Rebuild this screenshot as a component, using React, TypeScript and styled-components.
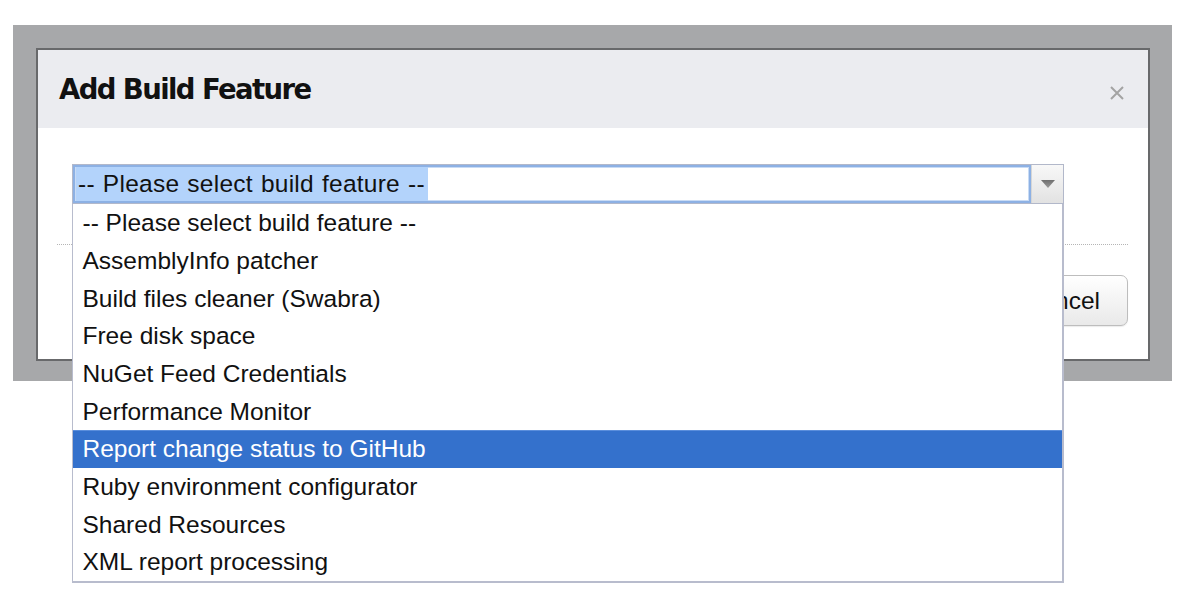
import React from "react";
import styled, { createGlobalStyle } from "styled-components";

const GlobalStyle = createGlobalStyle`
  html, body { margin: 0; padding: 0; background: #ffffff; }
  body { font-family: "Liberation Sans", Arial, sans-serif; color: #111; }
`;

const Page = styled.div`
  height: 600px;
  box-sizing: border-box;
  padding: 25px 28px 0 13px;
`;

const Backdrop = styled.div`
  width: 1159px;
  box-sizing: border-box;
  background: #a7a8aa;
  padding: 23px 22px 20px 23px;
`;

const Dialog = styled.div`
  border: 2px solid #68696b;
  background: #ffffff;
  display: flex;
  flex-direction: column;
`;

const Header = styled.div`
  height: 78px;
  background: #ebecf0;
  display: flex;
  align-items: center;
  justify-content: space-between;
  padding: 0 23px 0 21px;
`;

const Title = styled.h1`
  margin: 0;
  font-family: "DejaVu Sans", "Liberation Sans", sans-serif;
  font-weight: bold;
  font-size: 27.5px;
  letter-spacing: -1.6px;
  color: #111;
`;

const Close = styled.button`
  border: 0;
  background: none;
  padding: 0;
  width: 16px;
  height: 16px;
  margin-top: 8px;
  display: flex;
  cursor: pointer;
`;

const Body = styled.div`
  padding: 36px 0 0 34px;
`;

const SelectWrap = styled.div`
  position: relative;
  width: 992px;
  height: 40px;
  box-sizing: border-box;
  border: 1px solid #b2b8ca;
  display: flex;
`;

const Input = styled.div`
  flex: 1;
  box-sizing: border-box;
  border: 2px solid #8db1e4;
  box-shadow: inset 0 0 0 1px #c8dbf5;
  display: flex;
  align-items: center;
  padding-left: 1px;
  font-size: 24.5px;
`;

const Selected = styled.span`
  background: #b3d3fb;
  padding: 3px 3px 3px 2px;
  line-height: 28px;
  letter-spacing: 0.25px;
  word-spacing: 1px;
`;

const ArrowButton = styled.div`
  width: 31px;
  background: linear-gradient(#f8f8f8, #e2e2e2);
  border-left: 1px solid #d6d6d6;
  display: flex;
  align-items: center;
  justify-content: center;
`;

const Dropdown = styled.ul`
  position: absolute;
  left: -1px;
  top: 39px;
  width: 992px;
  box-sizing: border-box;
  margin: 0;
  padding: 0;
  list-style: none;
  background: #ffffff;
  border: 2px solid #b8bccd;
  border-top: 0;
  border-left-width: 1.5px;
  z-index: 10;
`;

const Item = styled.li<{ $active?: boolean }>`
  height: 37.67px;
  box-sizing: border-box;
  display: flex;
  align-items: center;
  padding-left: 9.5px;
  font-size: 24.5px;
  color: ${(p) => (p.$active ? "#ffffff" : "#111")};
  background: ${(p) => (p.$active ? "#3471cc" : "transparent")};
  border-top: 1px solid ${(p) => (p.$active ? "#5a8edc" : "transparent")};
`;

const Separator = styled.div`
  margin: 40px 20px 0 19px;
  border-top: 1px dotted #b5b5b5;
`;

const Buttons = styled.div`
  display: flex;
  justify-content: flex-end;
  gap: 12px;
  padding: 30px 20px 33px 0;
`;

const Button = styled.button`
  height: 51px;
  box-sizing: border-box;
  padding: 0 27px;
  border: 1px solid #bdbdbd;
  border-radius: 7px;
  background: linear-gradient(#ffffff, #e9e9e9);
  font-family: "Liberation Sans", Arial, sans-serif;
  font-size: 24.5px;
  color: #111;
  box-shadow: 0 1px 1px rgba(0, 0, 0, 0.08);
`;

const options = [
  "-- Please select build feature --",
  "AssemblyInfo patcher",
  "Build files cleaner (Swabra)",
  "Free disk space",
  "NuGet Feed Credentials",
  "Performance Monitor",
  "Report change status to GitHub",
  "Ruby environment configurator",
  "Shared Resources",
  "XML report processing",
];

export default function App() {
  return (
    <>
      <GlobalStyle />
      <Page>
        <Backdrop>
          <Dialog>
            <Header>
              <Title>Add Build Feature</Title>
              <Close aria-label="Close">
                <svg width="16" height="16" viewBox="0 0 16 16">
                  <path d="M2 2 L14 14 M14 2 L2 14" stroke="#a3a3a3" strokeWidth="2" />
                </svg>
              </Close>
            </Header>
            <Body>
              <SelectWrap>
                <Input>
                  <Selected>-- Please select build feature --</Selected>
                </Input>
                <ArrowButton>
                  <svg width="16" height="10" viewBox="0 0 16 10">
                    <defs>
                      <linearGradient id="tri" x1="0" y1="0" x2="0" y2="1">
                        <stop offset="0" stopColor="#6f6f6f" />
                        <stop offset="1" stopColor="#9a9a9a" />
                      </linearGradient>
                    </defs>
                    <path d="M1 1 L15 1 L8 9 Z" fill="url(#tri)" />
                  </svg>
                </ArrowButton>
                <Dropdown>
                  {options.map((o, i) => (
                    <Item key={o} $active={i === 6}>
                      {o}
                    </Item>
                  ))}
                </Dropdown>
              </SelectWrap>
            </Body>
            <Separator />
            <Buttons>
              <Button>Save</Button>
              <Button>Cancel</Button>
            </Buttons>
          </Dialog>
        </Backdrop>
      </Page>
    </>
  );
}
